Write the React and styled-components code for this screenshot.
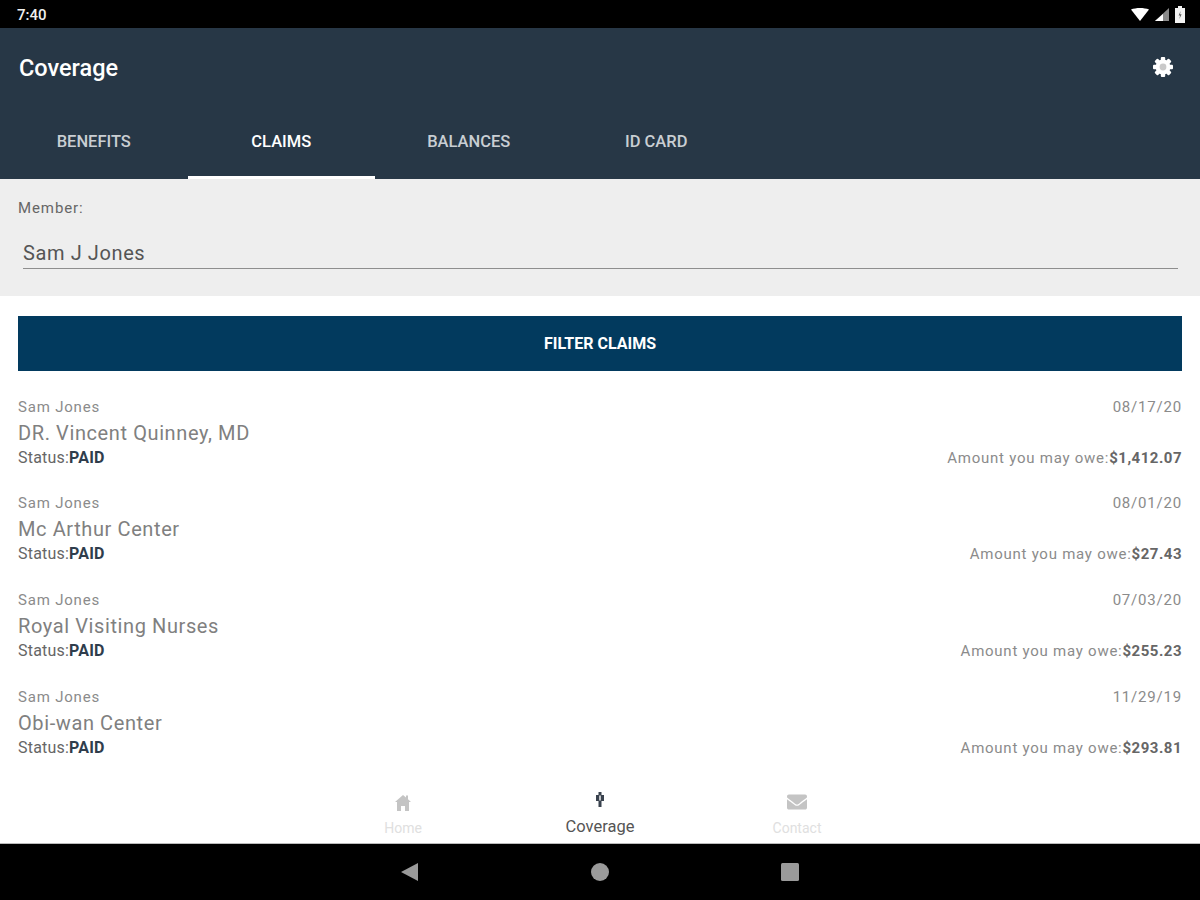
import React from 'react';
import styled, { createGlobalStyle } from 'styled-components';
import { FaEnvelope } from 'react-icons/fa';

const GlobalStyle = createGlobalStyle`
  html, body {
    margin: 0;
    padding: 0;
    background: #fff;
    font-family: Roboto, "Liberation Sans", sans-serif;
  }
`;

const claims = [
  { provider: 'DR. Vincent Quinney, MD', date: '08/17/20', amount: '$1,412.07' },
  { provider: 'Mc Arthur Center', date: '08/01/20', amount: '$27.43' },
  { provider: 'Royal Visiting Nurses', date: '07/03/20', amount: '$255.23' },
  { provider: 'Obi-wan Center', date: '11/29/19', amount: '$293.81' },
];

const tabs = ['Benefits', 'Claims', 'Balances', 'ID Card'];

// eight teeth around a disc, the centre is grey rather than a hole
const GearIcon = () => (
  <GearSlot>
    <svg width="20" height="20" viewBox="0 0 20 20">
      {[0, 45, 90, 135].map(angle => (
        <rect key={angle} x="7.8" y="0" width="4.4" height="20" rx="1" fill="#fff" transform={`rotate(${angle} 10 10)`} />
      ))}
      <circle cx="10" cy="10" r="7.4" fill="#fff" />
      <circle cx="10" cy="10" r="3.4" fill="#c9c9c9" />
    </svg>
  </GearSlot>
);

const App = () => (
  <Screen>
    <GlobalStyle />
    <StatusBar>
      <Clock>7:40</Clock>
      <StatusIcons>
        <svg width="18" height="13" viewBox="0 0 18 13">
          <path d="M0 1.5C5-.5 13-.5 18 1.5L9 13z" fill="#fff" />
        </svg>
        <svg width="14" height="13" viewBox="0 0 14 13">
          <path d="M14 0v13H0z" fill="#8a8a8a" />
          <path d="M8 6v7H0z" fill="#fff" />
        </svg>
        <svg width="10" height="17" viewBox="0 0 10 17">
          <path d="M3 0h4v2h3v15H0V2h3z" fill="#f2f2f2" />
          <path d="M5.6 5 3.6 9.5h1.5L4.4 13l2.2-4.8H5z" fill="#555" />
        </svg>
      </StatusIcons>
    </StatusBar>

    <Header>
      <TitleRow>
        <Title>Coverage</Title>
        <GearIcon />
      </TitleRow>
      <TabBar>
        {tabs.map(tab => (
          <Tab key={tab} $active={tab === 'Claims'}>{tab}</Tab>
        ))}
      </TabBar>
    </Header>

    <MemberPanel>
      <MemberLabel>Member:</MemberLabel>
      <MemberValue>Sam J Jones</MemberValue>
    </MemberPanel>

    <Content>
      <FilterButton>Filter Claims</FilterButton>
      <ClaimList>
        {claims.map(claim => (
          <ClaimRow key={claim.provider}>
            <TopLine>
              <span>Sam Jones</span>
              <DateText>{claim.date}</DateText>
            </TopLine>
            <Provider>{claim.provider}</Provider>
            <BottomLine>
              <StatusText>Status:<Paid>PAID</Paid></StatusText>
              <span>Amount you may owe:<Amount>{claim.amount}</Amount></span>
            </BottomLine>
          </ClaimRow>
        ))}
      </ClaimList>
    </Content>

    <BottomNav>
      <NavItem>
        <NavIcon>
          <svg width="16" height="17" viewBox="0 0 16 17">
            <path d="M8 1 11 3.6V1.5h2v3.8L16 8h-2v9h-4v-5H6v5H2V8H0z" fill="#c4c4c4" />
          </svg>
        </NavIcon>
        <NavLabel>Home</NavLabel>
      </NavItem>
      <NavItem>
        <NavIcon>
          <svg width="12" height="20" viewBox="0 0 12 20">
            <path d="M4.5 0h3v3H10v6H7.5v6h-3V9H2V3h2.5z" fill="#39424e" />
            <path d="M5.3 3.5h1.4v5H5.3z" fill="#fff" />
          </svg>
        </NavIcon>
        <NavLabel $active>Coverage</NavLabel>
      </NavItem>
      <NavItem>
        <NavIcon>
          <FaEnvelope size={20} color="#c4c4c4" />
        </NavIcon>
        <NavLabel>Contact</NavLabel>
      </NavItem>
    </BottomNav>

    <SystemBar>
      <svg width="20" height="20" viewBox="0 0 20 20">
        <path d="M18 1v18L1 10z" fill="#9a9a9a" />
      </svg>
      <svg width="20" height="20" viewBox="0 0 20 20">
        <circle cx="10" cy="10" r="9" fill="#9a9a9a" />
      </svg>
      <svg width="20" height="20" viewBox="0 0 20 20">
        <rect x="1" y="1" width="18" height="18" rx="1.5" fill="#9a9a9a" />
      </svg>
    </SystemBar>
  </Screen>
);

const Screen = styled.div`
  width: 1200px;
  height: 900px;
  display: flex;
  flex-direction: column;
  overflow: hidden;
  background: #fff;
`;

const StatusBar = styled.div`
  height: 28px;
  flex: none;
  background: #000;
  display: flex;
  align-items: center;
  justify-content: space-between;
  padding: 0 15px 0 17px;
`;

const Clock = styled.span`
  color: #f0f0f0;
  font-size: 15px;
  line-height: 28px;
  padding-top: 2px;
  font-weight: 500;
`;

const StatusIcons = styled.div`
  display: flex;
  align-items: center;
  gap: 6px;
`;

const Header = styled.header`
  height: 151px;
  flex: none;
  background: #273746;
  display: flex;
  flex-direction: column;
  justify-content: space-between;
`;

const TitleRow = styled.div`
  display: flex;
  align-items: center;
  justify-content: space-between;
  padding: 26px 27px 0 19px;
`;

const GearSlot = styled.div`
  display: flex;
  margin-bottom: 2px;
`;

const Title = styled.h1`
  margin: 0;
  color: #fff;
  font-size: 23.5px;
  line-height: 28px;
  font-weight: 500;
`;

const TabBar = styled.nav`
  display: flex;
`;

const Tab = styled.div`
  width: 187.5px;
  height: 75px;
  box-sizing: border-box;
  padding-top: 3px;
  display: flex;
  align-items: center;
  justify-content: center;
  font-size: 16.5px;
  font-weight: 500;
  text-transform: uppercase;
  color: ${props => (props.$active ? '#fff' : '#c9ced3')};
  border-bottom: 3px solid ${props => (props.$active ? '#fff' : 'transparent')};
`;

const MemberPanel = styled.section`
  height: 117px;
  flex: none;
  box-sizing: border-box;
  background: #eeeeee;
  padding: 20px 22px 0 18px;
`;

const MemberLabel = styled.div`
  font-size: 15px;
  line-height: 18px;
  letter-spacing: 0.9px;
  color: #666;
`;

const MemberValue = styled.div`
  margin: 17px 0 0 5px;
  height: 35px;
  box-sizing: border-box;
  padding-top: 4px;
  font-size: 20px;
  line-height: 30px;
  letter-spacing: 0.6px;
  color: #555;
  border-bottom: 1px solid #8e8e8e;
`;

const Content = styled.main`
  flex: 1;
  padding: 20px 18px 0;
`;

const FilterButton = styled.button`
  display: block;
  width: 100%;
  height: 55px;
  border: none;
  background: #023a5e;
  color: #fff;
  font-family: inherit;
  font-size: 16px;
  font-weight: 700;
  text-transform: uppercase;
`;

const ClaimList = styled.div`
  margin-top: 25.8px;
  display: flex;
  flex-direction: column;
  gap: 15.7px;
`;

const ClaimRow = styled.article`
  height: 81px;
  display: flex;
  flex-direction: column;
  color: #8b8b8b;
`;

const TopLine = styled.div`
  display: flex;
  justify-content: space-between;
  font-size: 15px;
  line-height: 20px;
  letter-spacing: 0.8px;
`;

const DateText = styled.span`
  letter-spacing: 0.8px;
`;

const Provider = styled.div`
  padding-top: 1px;
  font-size: 20px;
  line-height: 30px;
  letter-spacing: 0.6px;
  color: #808080;
`;

const BottomLine = styled.div`
  display: flex;
  justify-content: space-between;
  font-size: 15px;
  line-height: 20px;
  letter-spacing: 0.75px;
`;

const StatusText = styled.span`
  color: #666;
  font-size: 16px;
  letter-spacing: 0.2px;
`;

const Paid = styled.b`
  color: #2f3d4c;
  font-weight: 700;
`;

const Amount = styled.b`
  color: #666;
  font-weight: 700;
  letter-spacing: 0.5px;
`;

const BottomNav = styled.nav`
  height: 64px;
  flex: none;
  box-sizing: border-box;
  display: flex;
  justify-content: center;
  border-bottom: 1px solid #bbb;
`;

const NavItem = styled.div`
  width: 197px;
  padding-top: 12px;
  display: flex;
  flex-direction: column;
  align-items: center;
`;

const NavIcon = styled.div`
  height: 20px;
  display: flex;
  align-items: center;
`;

const NavLabel = styled.span`
  margin-top: ${props => (props.$active ? '6px' : '7px')};
  font-size: ${props => (props.$active ? '16.5px' : '14px')};
  line-height: 18px;
  color: ${props => (props.$active ? '#555' : '#e0e0e0')};
`;

const SystemBar = styled.div`
  height: 56px;
  flex: none;
  background: #000;
  display: flex;
  align-items: center;
  justify-content: center;
  gap: 170px;
`;

export default App;
